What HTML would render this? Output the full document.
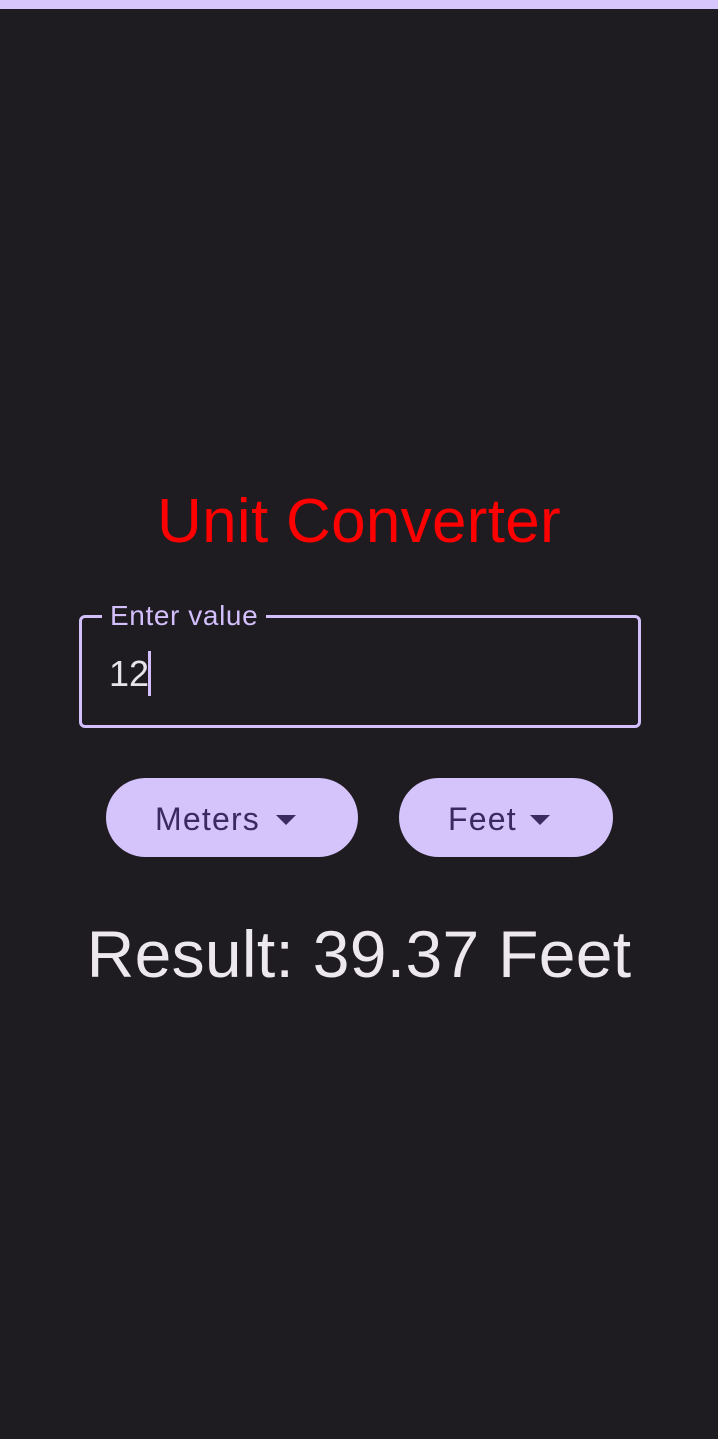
<!DOCTYPE html>
<html><head><style>
body{margin:0;width:718px;height:1439px;background:#1e1b21;font-family:"Liberation Sans",sans-serif;position:relative;overflow:hidden}
.top{position:absolute;left:0;top:0;width:718px;height:9px;background:#d6c6fb}
.title{position:absolute;left:0;width:718px;top:486px;text-align:center;color:#ff0000;font-size:62px;line-height:72px;letter-spacing:0.3px}
.field{position:absolute;left:79px;top:615px;width:556px;height:107px;border:3px solid #d3bffb;border-radius:6px}
.label{position:absolute;left:102px;top:600px;padding:0 8px;background:#1e1b21;color:#d3bffb;font-size:28px;line-height:32px;letter-spacing:0.6px}
.val{position:absolute;left:109px;top:654px;color:#e8e3ea;font-size:36px;line-height:40px}
.caret{position:absolute;left:148px;top:651px;width:3px;height:45px;background:#d3bffb}
.btn{position:absolute;top:778px;height:79px;border-radius:40px;background:#d5c3fb;color:#3a2a60;font-size:32px;line-height:83px;letter-spacing:1.2px}
.btn span{position:absolute;top:0}
.tri{position:absolute;top:37px;width:0;height:0;border-left:10px solid transparent;border-right:10px solid transparent;border-top:10px solid #3a2a60}
.res{position:absolute;left:0;width:718px;top:914px;text-align:center;color:#ede8ee;font-size:66px;line-height:80px;letter-spacing:0.3px}
</style></head><body>
<div class="top"></div>
<div class="title">Unit Converter</div>
<div class="field"></div>
<div class="label">Enter value</div>
<div class="val">12</div>
<div class="caret"></div>
<div class="btn" style="left:106px;width:252px"><span style="left:49px">Meters</span><div class="tri" style="left:170px"></div></div>
<div class="btn" style="left:399px;width:214px"><span style="left:49px">Feet</span><div class="tri" style="left:131px"></div></div>
<div class="res">Result: 39.37 Feet</div>
</body></html>
